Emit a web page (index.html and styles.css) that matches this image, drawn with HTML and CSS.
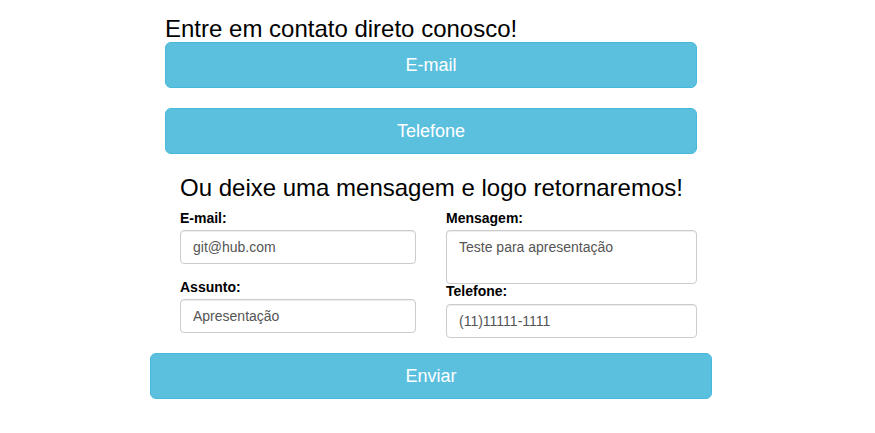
FILE: index.html
```html
<!DOCTYPE html>
<html lang="pt-BR">
<head>
<meta charset="utf-8">
<title>Contato</title>
<link rel="stylesheet" href="styles.css">
</head>
<body>
<div class="wrap">
  <section class="direct">
    <h1 class="title">Entre em contato direto conosco!</h1>
    <button class="btn btn-wide">E-mail</button>
    <button class="btn btn-wide btn-second">Telefone</button>
  </section>
  <form class="form">
    <h2 class="subtitle">Ou deixe uma mensagem e logo retornaremos!</h2>
    <div class="grid">
      <div class="col">
        <label class="label">E-mail:</label>
        <input class="control" type="text" value="git@hub.com">
        <label class="label label-next">Assunto:</label>
        <input class="control" type="text" value="Apresentação">
      </div>
      <div class="col">
        <label class="label">Mensagem:</label>
        <textarea class="control area">Teste para apresentação</textarea>
        <label class="label label-tel">Telefone:</label>
        <input class="control control-tel" type="text" value="(11)11111-1111">
      </div>
    </div>
    <button class="btn btn-send" type="button">Enviar</button>
  </form>
</div>
</body>
</html>
```
FILE: styles.css
```css
* { box-sizing: border-box; }
html, body {
  margin: 0;
  padding: 0;
  background: #fff;
  font-family: "Liberation Sans", Arial, sans-serif;
  color: #000;
}
.wrap {
  width: 562px;
  margin-left: 150px;
}
.direct {
  padding: 15px 15px 0;
}
.title {
  margin: 0;
  font-size: 24px;
  font-weight: 400;
  line-height: 27px;
}
.btn {
  display: block;
  width: 100%;
  height: 46px;
  padding: 10px 16px;
  font-family: "Liberation Sans", Arial, sans-serif;
  font-size: 18px;
  line-height: 24px;
  color: #fff;
  background: #5bc0de;
  border: 1px solid #46b8da;
  border-radius: 6px;
  text-align: center;
}
.btn-second { margin-top: 20px; }
.form {
  margin: 0;
}
.subtitle {
  margin: 20px 0 0 30px;
  font-size: 24px;
  font-weight: 400;
  line-height: 27px;
}
.grid {
  display: grid;
  grid-template-columns: 236px 251px;
  column-gap: 30px;
  margin: 7px 0 0 30px;
}
.col {
  display: flex;
  flex-direction: column;
}
.label {
  font-size: 14px;
  font-weight: 700;
  line-height: 20px;
  height: 20px;
  margin-bottom: 2px;
}
.label-next { margin-top: 13px; }
.label-tel { margin-top: -3px; margin-bottom: 3px; }
.control {
  display: block;
  width: 100%;
  height: 34px;
  padding: 6px 12px;
  font-family: "Liberation Sans", Arial, sans-serif;
  font-size: 14px;
  line-height: 20px;
  color: #555;
  background: #fff;
  border: 1px solid #ccc;
  border-radius: 4px;
  box-shadow: inset 0 1px 1px rgba(0,0,0,.075);
  margin: 0;
}
.area {
  height: 54px;
  resize: none;
  overflow: hidden;
}
.btn-send {
  margin-top: 15px;
}
```
